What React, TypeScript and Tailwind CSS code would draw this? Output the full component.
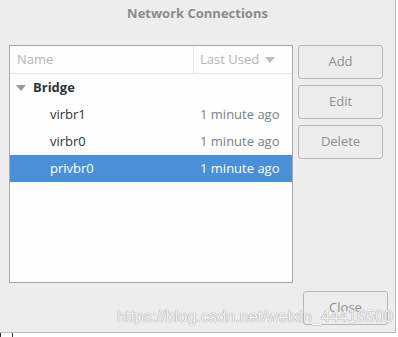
export default function App() {
  const rows = [
    { name: "virbr1", used: "1 minute ago", selected: false },
    { name: "virbr0", used: "1 minute ago", selected: false },
    { name: "privbr0", used: "1 minute ago", selected: true },
  ];

  return (
    <div className="w-[398px] h-[337px] bg-white overflow-hidden relative" style={{ fontFamily: '"Open Sans", "DejaVu Sans", sans-serif' }}>
      <div className="w-[396px] h-[333px] bg-[#ededed] border-r border-b border-[#bdbdbd] flex flex-col">
        <div className="h-[45px] pt-[4px] text-center text-[13px] font-bold text-[#8b8b8b]">Network Connections</div>

        <div className="flex pl-[9px]">
          <div className="w-[284px] h-[238px] bg-[#fdfdfd] border border-[#a9a9a9] flex flex-col">
            <div className="h-[28px] flex border-b border-[#e6e6e6] text-[13px] text-[#b5b5b5]">
              <div className="w-[184px] border-r border-[#e6e6e6] pl-[7px] flex items-center">Name</div>
              <div className="flex-1 pl-[6px] flex items-center gap-[6px]">
                Last Used
                <svg width="10" height="6" viewBox="0 0 10 6">
                  <path d="M0 0 L10 0 L5 6 Z" fill="#bdbdbd" />
                </svg>
              </div>
            </div>
            <div className="h-[27px] flex items-center pl-[6px] text-[13px] font-bold text-[#2e3436]">
              <svg width="10" height="6" viewBox="0 0 10 6" className="mr-[7px]">
                <path d="M0 0 L10 0 L5 6 Z" fill="#9a9a9a" />
              </svg>
              Bridge
            </div>
            {rows.map((r) => (
              <div
                key={r.name}
                className={`h-[27px] flex items-center text-[13px] ${r.selected ? "bg-[#4a90d9] text-white" : ""}`}
              >
                <div className={`w-[190px] pl-[40px] ${r.selected ? "text-white" : "text-[#2e3436]"}`}>{r.name}</div>
                <div className={`${r.selected ? "text-white" : "text-[#7b8285]"}`}>{r.used}</div>
              </div>
            ))}
          </div>

          <div className="ml-[5px] flex flex-col gap-[6px]">
            {["Add", "Edit", "Delete"].map((b) => (
              <div
                key={b}
                className="w-[85px] h-[34px] rounded-[3px] border border-[#b6b6b6] bg-[#ededed] flex items-center justify-center text-[13px] text-[#8f8f8f]"
              >
                {b}
              </div>
            ))}
          </div>
        </div>

        <div className="flex justify-end pr-[7px] pt-[8px]">
          <div className="w-[85px] h-[34px] rounded-[3px] border border-[#b6b6b6] bg-[#ededed] flex items-center justify-center text-[13px] text-[#8f8f8f]">
            Close
          </div>
        </div>
      </div>

      <div
        className="absolute left-[117px] top-[305px] text-[16px] text-white/90 tracking-[0.1px]"
        style={{ fontFamily: '"Liberation Sans", Arial, sans-serif', textShadow: "0 0 1px #9a9a9a, 0 0 1px #9a9a9a" }}
      >
        https://blog.csdn.net/weixin_44416500
      </div>

      <div className="absolute left-0 top-[333px] w-[1px] h-[4px] bg-[#333]" />
      <div className="absolute left-[12px] top-[333px] w-[1px] h-[4px] bg-[#333]" />
    </div>
  );
}
